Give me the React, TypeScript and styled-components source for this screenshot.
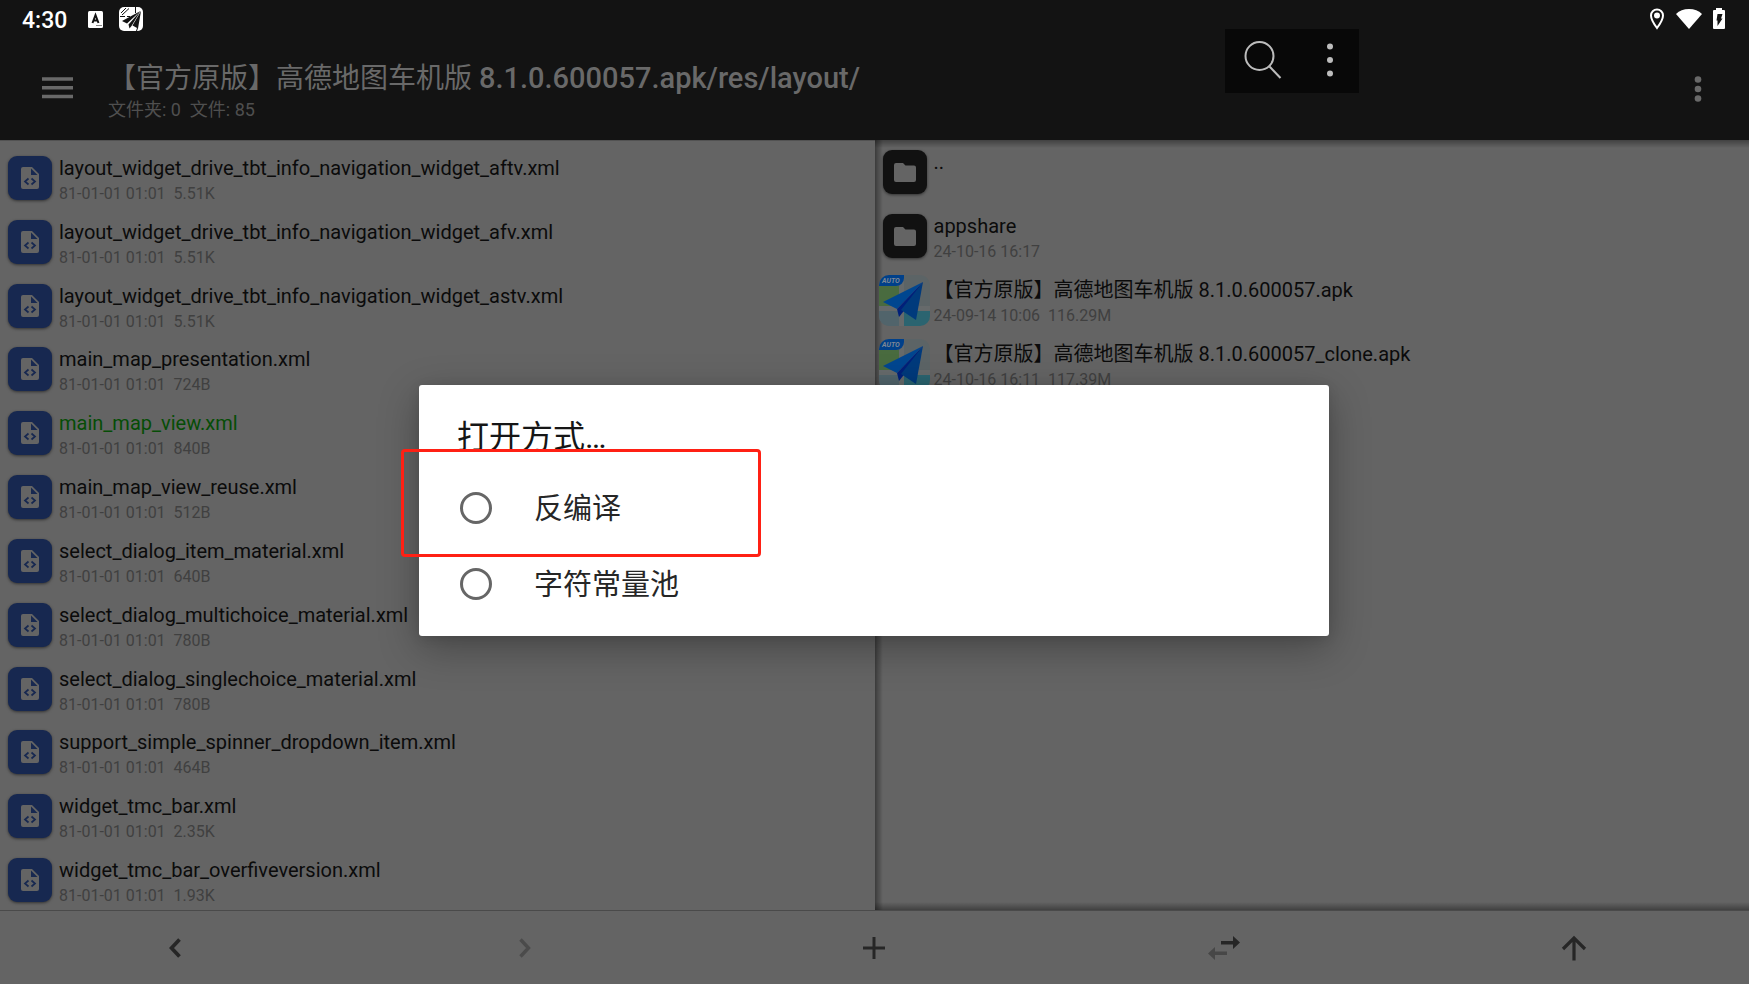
import React from "react";
import styled, { createGlobalStyle, css } from "styled-components";

const GlobalStyle = createGlobalStyle`
  *, *::before, *::after { box-sizing: border-box; }
  html, body, #root { height: 100%; }
  body {
    margin: 0;
    background: #646464;
    font-family: Roboto, "Noto Sans CJK SC", sans-serif;
    overflow: hidden;
  }
`;

const Screen = styled.div`
  position: relative;
  display: flex;
  flex-direction: column;
  min-height: 100vh;
  height: 100%;
`;

const Header = styled.header`
  flex: none;
  background: #131313;
  color: #696969;
`;

const StatusBar = styled.div`
  display: flex;
  align-items: center;
  justify-content: space-between;
  height: 38px;
  padding: 0 24px 0 22px;
  color: #fff;
`;

const StatusGroup = styled.div<{ $gap: number }>`
  display: flex;
  align-items: center;
  gap: ${(p) => p.$gap}px;
`;

const Clock = styled.time`
  padding-top: 3px;
  font-size: 23px;
  line-height: 36px;
  font-weight: 500;
`;

const AppBar = styled.div`
  display: flex;
  align-items: center;
  height: 102px;
  padding: 0 31px 0 36px;
`;

const IconButton = styled.button`
  display: flex;
  align-items: center;
  justify-content: center;
  flex: none;
  padding: 0;
  border: 0;
  background: none;
  color: inherit;
`;

const Heading = styled.div`
  flex: 1;
  min-width: 0;
  padding: 4px 0 0 30px;
`;

const Title = styled.h1`
  margin: 0;
  font-size: 28px;
  line-height: 36px;
  font-weight: 400;
  white-space: nowrap;
`;

const Latin = styled.span`
  font-size: 29px;
  font-weight: 500;
`;

const Summary = styled.p`
  margin: 0;
  font-size: 18px;
  line-height: 26px;
  color: #4f4f4f;
  white-space: pre;
`;

const FloatingTools = styled.div`
  position: absolute;
  top: 29px;
  right: 390px;
  display: flex;
  align-items: center;
  justify-content: space-between;
  width: 134px;
  height: 64px;
  padding: 0 25px 2px 19px;
  background: #080808;
  color: #bdbdbd;
`;

const Panes = styled.main`
  flex: 1;
  display: grid;
  grid-template-columns: 1fr 1fr;
  min-height: 0;
`;

const Pane = styled.section<{ $inactive?: boolean }>`
  min-width: 0;
  overflow: hidden;
  display: flex;
  ${(p) =>
    p.$inactive
      ? css`
          background: linear-gradient(to right, rgba(0, 0, 0, 0.4), transparent 8px),
            linear-gradient(to bottom, rgba(0, 0, 0, 0.35), transparent 8px),
            linear-gradient(to top, rgba(0, 0, 0, 0.35), transparent 8px);
        `
      : css`
          border-top: 1px solid #525252;
        `}
`;

const FileList = styled.ul<{ $fill?: boolean }>`
  flex: 1;
  min-width: 0;
  display: grid;
  grid-auto-rows: ${(p) => (p.$fill ? "minmax(56px, 1fr)" : "64px")};
  margin: ${(p) => (p.$fill ? "5px 0 -2px" : "0")};
  padding: 0;
  list-style: none;
`;

const FileRow = styled.li`
  display: flex;
  align-items: center;
  gap: 3px;
  padding-left: 4px;
  white-space: nowrap;
`;

const IconSlot = styled.div`
  flex: none;
  display: flex;
  justify-content: center;
  width: 52px;
`;

const Tile = styled.div<{ $folder?: boolean }>`
  display: flex;
  align-items: center;
  justify-content: center;
  width: 44px;
  height: 44px;
  border-radius: 9px;
  background: ${(p) => (p.$folder ? "#111" : "#172850")};
  color: #646464;
  box-shadow: 0 1px 3px rgba(0, 0, 0, 0.5);
`;

const FileText = styled.div`
  align-self: flex-start;
  padding-top: 8px;
`;

const FileName = styled.div<{ $marked?: boolean }>`
  font-size: 20px;
  line-height: 29px;
  color: ${(p) => (p.$marked ? "#064d06" : "#0b0b0b")};
`;

const FileMeta = styled.div`
  font-size: 16px;
  line-height: 21px;
  color: #404040;
  white-space: pre;
`;

const BottomBar = styled.nav`
  flex: none;
  display: grid;
  grid-template-columns: repeat(5, 1fr);
  height: 74px;
  border-top: 1px solid #4a4a4a;
  color: #262626;
`;

const Dialog = styled.div`
  position: absolute;
  top: 385px;
  left: 419px;
  right: 420px;
  padding: 30px 38px 14px;
  border-radius: 3px;
  background: #fff;
  box-shadow: 0 12px 40px rgba(0, 0, 0, 0.3), 0 2px 12px rgba(0, 0, 0, 0.1);
`;

const DialogTitle = styled.h2`
  margin: 0 0 11px;
  font-size: 32px;
  line-height: 44px;
  font-weight: 400;
  color: #161616;
`;

const Option = styled.label`
  display: flex;
  align-items: center;
  gap: 42px;
  height: 76px;
  padding-left: 3px;
  font-size: 29px;
  line-height: 42px;
  color: #262626;
`;

const OptionText = styled.span`
  padding-top: 2px;
`;

const Radio = styled.input`
  appearance: none;
  flex: none;
  width: 32px;
  height: 32px;
  margin: 0;
  border: 3px solid #666;
  border-radius: 50%;
`;

const Highlight = styled.div`
  position: absolute;
  top: 449px;
  left: 401px;
  width: 360px;
  height: 108px;
  border: 3px solid #ff2014;
  border-radius: 4px;
  pointer-events: none;
`;

const XmlIcon = () => (
  <svg width="18" height="22" viewBox="0 0 18 22">
    <path d="M2 0h9l7 7v13a2 2 0 0 1-2 2H2a2 2 0 0 1-2-2V2a2 2 0 0 1 2-2z" fill="currentColor" />
    <path d="M10 1.5V8h6.500z" fill="#172850" />
    <path d="M7.500 11.500 4 14.500l3.500 3M10.500 11.500l3.500 3-3.500 3" fill="none" stroke="#172850" strokeWidth="1.700" />
  </svg>
);

const FolderIcon = () => (
  <svg width="22" height="19" viewBox="0 0 22 19" fill="currentColor">
    <path d="M2 0h7l2.500 2.500H20a2 2 0 0 1 2 2V17a2 2 0 0 1-2 2H2a2 2 0 0 1-2-2V2a2 2 0 0 1 2-2z" />
  </svg>
);

const AutoMapIcon = () => (
  <svg width="51" height="51" viewBox="0 0 51 51">
    <defs>
      <clipPath id="app-shape">
        <rect width="51" height="51" rx="10" />
      </clipPath>
    </defs>
    <g clipPath="url(#app-shape)">
      <rect width="51" height="51" fill="#5c6466" />
      <path d="M0 11h20v20H0z" fill="#496b3f" />
      <path d="M0 36h20v15H0z" fill="#51646b" />
      <path d="M20 0h5v51h-5zM0 31h51v5H0z" fill="#666a6b" />
      <path d="M25 36h26v15H25z" fill="#2b6470" />
      <path d="M0 0h25v3a8 8 0 0 1-8 8H0z" fill="#00408a" />
      <path d="M44 7 4 27l14 7z" fill="#004690" />
      <path d="M44 7 18 34l2 8 4-5z" fill="#00207a" />
      <path d="M44 7 22 35l15 10z" fill="#003a7c" />
      <text x="3" y="8" fontSize="7" fontWeight="700" fontStyle="italic" fill="#7d8794">AUTO</text>
    </g>
  </svg>
);

const leftFiles = [
  ["layout_widget_drive_tbt_info_navigation_widget_aftv.xml", "5.51K"],
  ["layout_widget_drive_tbt_info_navigation_widget_afv.xml", "5.51K"],
  ["layout_widget_drive_tbt_info_navigation_widget_astv.xml", "5.51K"],
  ["main_map_presentation.xml", "724B"],
  ["main_map_view.xml", "840B"],
  ["main_map_view_reuse.xml", "512B"],
  ["select_dialog_item_material.xml", "640B"],
  ["select_dialog_multichoice_material.xml", "780B"],
  ["select_dialog_singlechoice_material.xml", "780B"],
  ["support_simple_spinner_dropdown_item.xml", "464B"],
  ["widget_tmc_bar.xml", "2.35K"],
  ["widget_tmc_bar_overfiveversion.xml", "1.93K"],
];

const rightFiles = [
  { name: "..", meta: "", folder: true },
  { name: "appshare", meta: "24-10-16 16:17", folder: true },
  { name: "【官方原版】高德地图车机版 8.1.0.600057.apk", meta: "24-09-14 10:06  116.29M", folder: false },
  { name: "【官方原版】高德地图车机版 8.1.0.600057_clone.apk", meta: "24-10-16 16:11  117.39M", folder: false },
];

export default function App() {
  return (
    <>
      <GlobalStyle />
      <Screen>
        <Header>
          <StatusBar>
            <StatusGroup $gap={17}>
              <Clock>4:30</Clock>
              <StatusGroup $gap={15}>
                <svg width="20" height="17" viewBox="-3 0 20 17">
                  <rect x="1" width="15" height="17" rx="1.500" fill="#fff" />
                  <path d="m5.500 12 3-8 3 8M6.500 9.500h4" fill="none" stroke="#131313" strokeWidth="2" />
                  <path d="M9.500 14.500h5" stroke="#131313" strokeDasharray="1 1" />
                </svg>
                <svg width="24" height="24" viewBox="0 0 24 24">
                  <rect width="24" height="24" rx="5" fill="#fff" />
                  <path d="M21.500 4 3 14l5 2.500zM21.500 4 9.500 17.500l1 4 2-2.500zM22 4l-8.500 14.500 5.500 3z" fill="#131313" />
                  <path d="M16.500 0v6M1 9.500h5M8 9.500h3M2 6l5-5M3 8l7-6.500M17.500 24l1-3" stroke="#131313" strokeWidth="1" />
                </svg>
              </StatusGroup>
            </StatusGroup>
            <StatusGroup $gap={11}>
              <svg width="16" height="22" viewBox="0 0 16 22">
                <path d="M8 1.500A6 6 0 0 0 2 7.500C2 12 8 20 8 20s6-8 6-12.500a6 6 0 0 0-6-6z" fill="none" stroke="#fff" strokeWidth="2" />
                <circle cx="8" cy="7.500" r="3" fill="#fff" />
              </svg>
              <svg width="26" height="20" viewBox="0 0 26 20">
                <path d="M0 5Q5 0 13 0t13 5L13 20z" fill="#fff" />
              </svg>
              <svg width="12" height="22" viewBox="0 0 12 22">
                <path d="M3 0h6v2h2q1 0 1 1v17q0 1-1 1H1q-1 0-1-1V3q0-1 1-1h2z" fill="#fff" />
                <path d="M4.500 6h5l-1.500 4.500h1.500L4.500 18v-5.500H3.500z" fill="#131313" />
              </svg>
            </StatusGroup>
          </StatusBar>
          <AppBar>
            <IconButton aria-label="菜单">
              <svg width="42" height="24" viewBox="0 0 42 24">
                <path d="M6 2h31M6 10.700h31M6 19.500h31" stroke="currentColor" strokeWidth="3.500" />
              </svg>
            </IconButton>
            <Heading>
              <Title>
                【官方原版】高德地图车机版 <Latin>8.1.0.600057.apk/res/layout/</Latin>
              </Title>
              <Summary>文件夹: 0  文件: 85</Summary>
            </Heading>
            <IconButton aria-label="更多">
              <svg width="40" height="30" viewBox="-20 -15 40 30" fill="currentColor">
                <circle cy="-9.500" r="3.300" />
                <circle r="3.300" />
                <circle cy="9.500" r="3.300" />
              </svg>
            </IconButton>
          </AppBar>
        </Header>

        <Panes>
          <Pane>
            <FileList $fill>
              {leftFiles.map(([name, size]) => (
                <FileRow key={name}>
                  <IconSlot>
                    <Tile>
                      <XmlIcon />
                    </Tile>
                  </IconSlot>
                  <FileText>
                    <FileName $marked={name === "main_map_view.xml"}>{name}</FileName>
                    <FileMeta>{"81-01-01 01:01  " + size}</FileMeta>
                  </FileText>
                </FileRow>
              ))}
            </FileList>
          </Pane>
          <Pane $inactive>
            <FileList>
              {rightFiles.map((f) => (
                <FileRow key={f.name}>
                  <IconSlot>
                    {f.folder ? (
                      <Tile $folder>
                        <FolderIcon />
                      </Tile>
                    ) : (
                      <AutoMapIcon />
                    )}
                  </IconSlot>
                  <FileText>
                    <FileName>{f.name}</FileName>
                    <FileMeta>{f.meta}</FileMeta>
                  </FileText>
                </FileRow>
              ))}
            </FileList>
          </Pane>
        </Panes>

        <BottomBar>
          <IconButton aria-label="后退">
            <svg width="12" height="20" viewBox="0 0 12 20">
              <path d="m10.500 1.500-8 8.500 8 8.500" fill="none" stroke="currentColor" strokeWidth="3.700" />
            </svg>
          </IconButton>
          <IconButton aria-label="前进">
            <svg width="12" height="20" viewBox="0 0 12 20">
              <path d="m1.500 1.500 8 8.500-8 8.500" fill="none" stroke="#4b4b4b" strokeWidth="3.400" />
            </svg>
          </IconButton>
          <IconButton aria-label="新建">
            <svg width="24" height="24" viewBox="0 0 24 24">
              <path d="M1 12h22M12 1v22" stroke="currentColor" strokeWidth="3" />
            </svg>
          </IconButton>
          <IconButton aria-label="交换">
            <svg width="32" height="24" viewBox="0 0 32 24">
              <path d="M13 5h12V0l7 6.500-7 6.500V8.500H13z" fill="currentColor" />
              <path d="M19 15.500H7V11l-7 6.500L7 24v-5h12z" fill="#474747" />
            </svg>
          </IconButton>
          <IconButton aria-label="上级目录">
            <svg width="26" height="26" viewBox="0 0 26 26">
              <path d="M13 25.500V3M2 14 13 3l11 11" fill="none" stroke="currentColor" strokeWidth="3.200" />
            </svg>
          </IconButton>
        </BottomBar>

        <FloatingTools>
          <IconButton aria-label="搜索">
            <svg width="38" height="38" viewBox="0 0 38 38" fill="none" stroke="currentColor" strokeWidth="2">
              <circle cx="15.500" cy="15" r="14" />
              <path d="m25.500 25.500 11 11.500" />
            </svg>
          </IconButton>
          <IconButton aria-label="选项">
            <svg width="8" height="36" viewBox="-4 -18 8 36" fill="currentColor">
              <circle cy="-13.500" r="3" />
              <circle r="3" />
              <circle cy="13.500" r="3" />
            </svg>
          </IconButton>
        </FloatingTools>

        <Dialog role="dialog" aria-labelledby="open-with">
          <DialogTitle id="open-with">打开方式…</DialogTitle>
          <Option>
            <Radio type="radio" name="open-with" />
            <OptionText>反编译</OptionText>
          </Option>
          <Option>
            <Radio type="radio" name="open-with" />
            <OptionText>字符常量池</OptionText>
          </Option>
        </Dialog>
        <Highlight />
      </Screen>
    </>
  );
}
